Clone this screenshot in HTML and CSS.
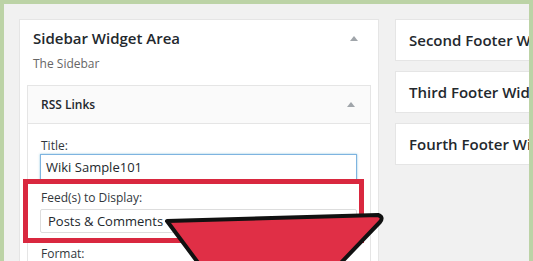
FILE: index.html
```html
<!DOCTYPE html>
<html lang="en">
<head>
    <meta charset="UTF-8">
    <title>Widgets</title>
    <link rel="stylesheet" href="styles.css">
</head>
<body>
    <div class="screen">
        <div class="sidebar-panel">
            <div class="panel-head">
                <h2>Sidebar Widget Area</h2>
                <span class="caret"></span>
            </div>
            <p class="panel-desc">The Sidebar</p>

            <div class="widget">
                <div class="widget-head">
                    <h3>RSS Links</h3>
                    <span class="caret"></span>
                </div>
                <div class="widget-body">
                    <label class="field-label">Title:</label>
                    <div class="text-input">Wiki Sample101</div>
                    <label class="field-label feed-label">Feed(s) to Display:</label>
                    <div class="select-input">Posts &amp; Comments</div>
                    <label class="field-label format-label">Format:</label>
                </div>
                <div class="highlight"></div>
            </div>
        </div>

        <div class="footer-areas">
            <div class="area-card">Second Footer Widget Area</div>
            <div class="area-card">Third Footer Widget Area</div>
            <div class="area-card">Fourth Footer Widget Area</div>
        </div>

        <svg class="arrow" width="533" height="261" viewBox="0 0 533 261">
            <path d="M167 221 L378 215 Q384 217 380 222 L336 268 L202 268 Z" fill="#e02f46" stroke="#111" stroke-width="4" stroke-linejoin="round"/>
        </svg>
    </div>
</body>
</html>
```

FILE: styles.css
```css
body {
    margin: 0;
    background: #bcd3a6;
    font-family: "Open Sans", Arial, sans-serif;
    color: #23282d;
    overflow: hidden;
}
.screen {
    position: relative;
    margin: 4px 4px 0 4px;
    height: 257px;
    background: #f1f1f1;
    padding: 15px 0 0 15px;
    box-sizing: border-box;
    display: flex;
    gap: 16px;
    overflow: hidden;
}
.sidebar-panel {
    width: 360px;
    flex-shrink: 0;
    background: #fff;
    border: 1px solid #e5e5e5;
    box-sizing: border-box;
    padding: 0 7px;
    align-self: flex-start;
    height: 300px;
}
.panel-head {
    display: flex;
    align-items: center;
    justify-content: space-between;
    padding: 8px 13px 0 6px;
}
.panel-head h2 {
    margin: 0;
    font-size: 15px;
    font-weight: 600;
    line-height: 20px;
}
.panel-desc {
    margin: 8px 0 0 6px;
    font-size: 12px;
    color: #666;
    line-height: 16px;
}
.caret {
    width: 0;
    height: 0;
    border-left: 4px solid transparent;
    border-right: 4px solid transparent;
    border-bottom: 5px solid #a0a5aa;
}
.widget {
    position: relative;
    margin-top: 13px;
    border: 1px solid #e5e5e5;
}
.widget-head {
    display: flex;
    align-items: center;
    justify-content: space-between;
    height: 37px;
    padding: 0 15px 0 13px;
    background: #fafafa;
    border-bottom: 1px solid #e5e5e5;
}
.widget-head h3 {
    margin: 0;
    font-size: 12px;
    font-weight: 600;
}
.widget-body {
    padding: 14px 13px 20px 12px;
    display: flex;
    flex-direction: column;
}
.field-label {
    font-size: 12px;
    line-height: 16px;
    padding-left: 1px;
    color: #32373c;
}
.text-input {
    margin-top: 0;
    height: 26px;
    box-sizing: border-box;
    border: 1px solid #7eb4e0;
    box-shadow: 0 0 2px rgba(30, 140, 190, 0.5);
    font-size: 13px;
    line-height: 24px;
    padding-left: 5px;
}
.feed-label {
    margin-top: 10px;
}
.select-input {
    margin-top: 3px;
    height: 24px;
    box-sizing: border-box;
    border: 1px solid #ddd;
    border-radius: 2px;
    font-size: 13px;
    line-height: 22px;
    padding-left: 7px;
}
.format-label {
    margin-top: 13px;
}
.highlight {
    position: absolute;
    left: -5px;
    top: 93px;
    width: 341px;
    height: 64px;
    box-sizing: border-box;
    border: 5px solid #d9283f;
}
.footer-areas {
    display: flex;
    flex-direction: column;
    gap: 10px;
    flex-shrink: 0;
}
.area-card {
    width: 260px;
    height: 42px;
    box-sizing: border-box;
    background: #fff;
    border: 1px solid #e5e5e5;
    font-size: 15px;
    font-weight: 600;
    line-height: 40px;
    padding-left: 13px;
    white-space: nowrap;
}
.arrow {
    position: absolute;
    left: -4px;
    top: -4px;
}
```
